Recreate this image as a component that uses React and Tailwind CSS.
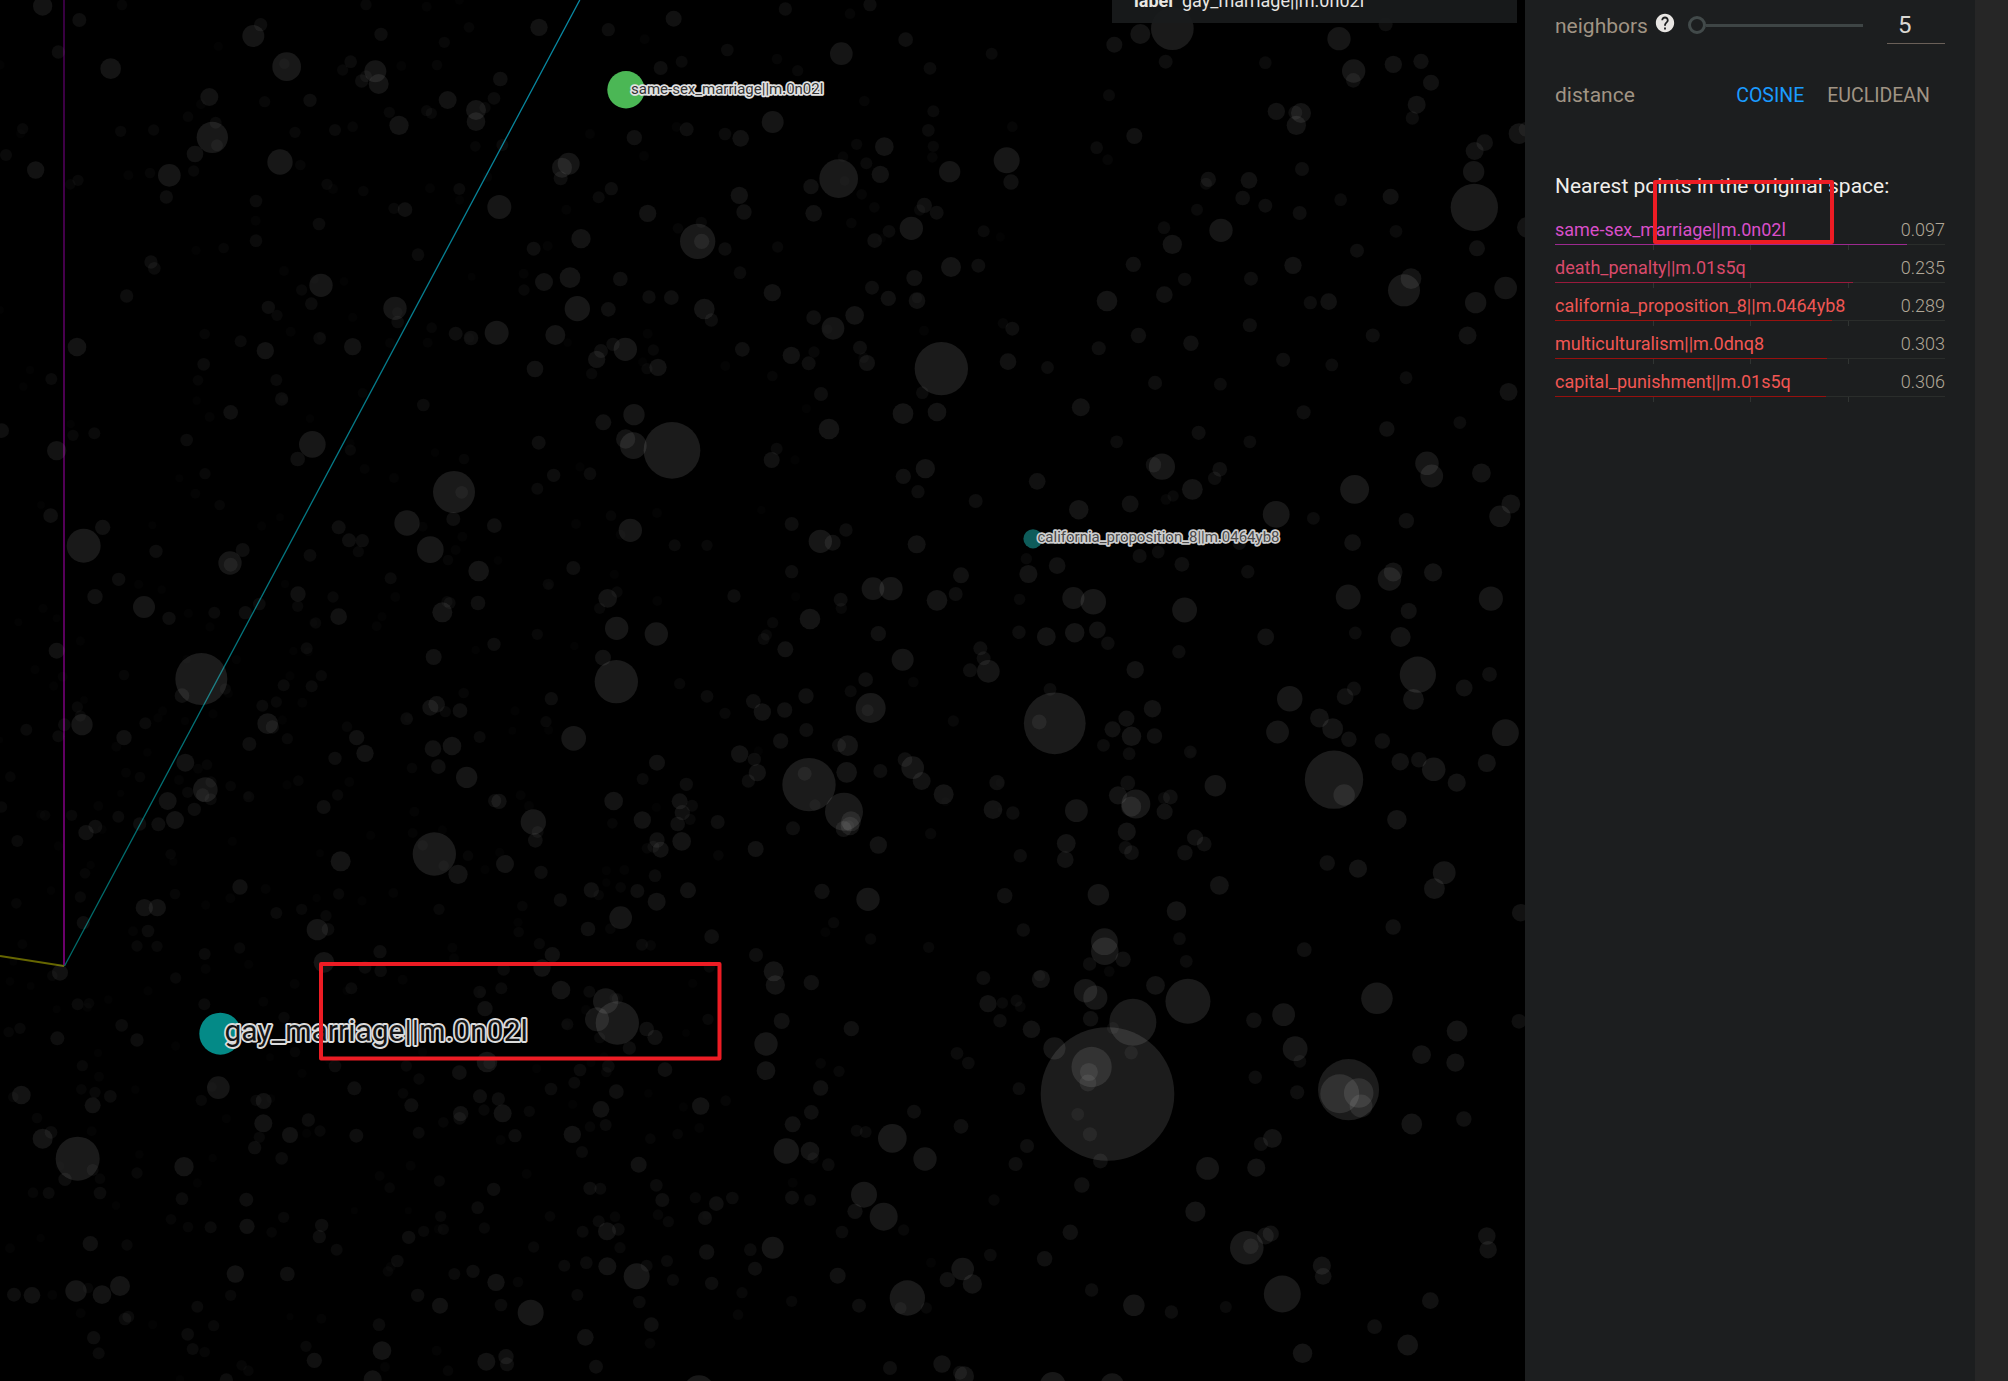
import React from 'react';

// Point cloud, grouped by sector. Each sector has an origin, a horizontal and
// vertical unit, and a flat list of "x,y,r" triples in those units.
const SECTORS = [
  {
    x: 0, y: 0, ux: 3, uy: 3,
    pts: `128,18,29 238,60,21 366,15,16 175,156,20 0,195,14 332,206,31 782,74,20 760,108,33 655,139,14 860,200,43 853,191,16 1098,14,17 1280,20,15 1378,0,14 1143,103,20 1407,82,16 1333,127,17 1052,185,19 1028,210,17 1085,243,20 1098,229,18 1126,214,33 1136,252,30 1204,198,15 1311,195,16 1501,237,22 1482,295,19 1343,300,27 1455,323,17 1428,330,30 1428,365,28 1168,337,17 1280,332,17 1294,340,17 1197,376,29 628,291,27 603,313,15 794,305,17 930,301,20 564,350,16 647,368,18 637,412,47 651,436,18 885,397,17 1005,390,18 1058,380,16 68,386,17 62,401,14 362,394,17 461,390,17 18,465,18 585,462,25 840,486,38 901,495,16 107,510,26 508,526,34 581,513,17 450,519,16 385,526,15 234,541,17 211,553,16 499,591,20 768,603,19 981,553,17 999,567,15 1090,573,16 1290,565,15 1378,567,18 1379,600,14 1426,439,16 1507,435,18 1462,531,15 1182,625,17 1215,629,22 1498,621,36 957,672,19 767,662,15 768,722,19 671,744,16 588,751,14 1254,764,19 453,786,20 463,805,19 852,813,15 963,856,35 943,838,14 905,870,17 934,911,19 1032,844,13 380,888,20 805,922,20 831,946,17 0,930,12 1185,925,35 1192,937,16 1193,966,19 1058,952,14 1295,983,16 1283,1028,15 1170,1029,15 1367,1001,21 1413,1014,22 1408,1014,15 1490,998,36 872,995,15 614,1002,16 722,1024,18 959,1015,19 964,1008,14 1058,1040,26 796,1052,26 231,1041,28 611,1093,19 594,1141,16 829,1140,18 845,1197,20 850,1197,14 90,1110,13 154,1137,18 70,1160,13 590,1202,13 1088,1179,15 692,1237,22 629,1251,15 930,1256,13 1270,1215,19 5,1292,22 212,1272,13 219,1306,17 283,1300,18 170,1352,29 560,1320,19 937,1333,40 893,1377,22 1051,1330,13 1051,1350,17 1305,1358,13 1392,1377,16 1415,830,12`,
  },
  {
    x: 500, y: 0, ux: 3, uy: 3,
    pts: `117,82,26 325,89,20 521,56,24 434,118,15 682,150,19 856,27,20 1050,41,16 1110,14,20 831,177,16 893,212,17 1024,161,34 1217,119,22 1475,161,18 1290,205,19 482,204,21 545,185,18 373,268,17 818,366,33 403,413,23 560,388,21 530,381,15 675,402,19 722,415,25 270,402,15 432,468,15 206,491,33 186,503,30 182,535,21 1093,303,16 1300,334,18 1285,391,19 1300,439,17 1297,472,16 1153,440,28 1070,433,17 1029,470,16 1016,536,58 1034,543,15 1099,490,18 1141,523,26 1349,515,32 1520,481,39 1533,546,23 1537,380,16 933,560,23 941,640,25 1085,583,16 1123,622,16 1054,669,16 1273,616,23 1259,630,17 1310,638,21 1234,685,35 1167,694,19 1124,722,22 1145,715,13 1451,694,18 1501,711,14 334,566,20 296,592,18 199,629,15 443,640,26 718,586,26 732,636,23 534,685,16 604,667,17 593,724,53 605,724,23 675,747,20 833,741,17 243,716,29 101,746,21 143,738,15 71,821,15 72,870,17 132,846,27 210,833,31 361,837,22 720,818,19 232,926,38 325,928,22 447,891,20 514,893,22 613,927,31 634,960,20 817,878,26 1116,863,21 1165,895,23 1243,834,24 1251,902,25 1251,894,16 1353,801,30 1435,797,21 166,1005,30 203,1028,13 339,1033,20 376,1048,35 303,1053,21 290,1078,26 275,1121,17 443,1001,15 460,1050,17 428,1086,14 441,1106,17 474,1102,26 105,1107,25 676,1098,15 727,1048,22 941,953,22 999,985,34 983,988,15 1064,946,28 1080,1043,21 1091,1073,16 1101,1089,24 874,1066,26 926,1090,21 942,1056,17 817,1128,16 1272,992,15 1509,970,16 1537,986,21 1524,1085,25 1324,1106,80 1267,1178,19 1209,1241,31 1311,1236,28 963,1182,21 919,1226,14 987,1287,31 402,1244,32 310,1267,24 377,1317,29 400,1337,40 516,1351,85 116,1328,21 830,1346,18 815,1380,24 885,1380,14`,
  },
  {
    x: 1090, y: 0, ux: 3, uy: 3,
    pts: `73,134,24 151,102,30 247,86,64 227,185,21 526,188,19 887,73,21 747,116,35 791,213,35 790,241,22 910,193,26 993,184,23 1023,248,24 980,314,27 967,354,20 57,286,18 133,408,24 20,443,19 53,479,16 559,334,26 616,338,21 633,339,30 619,376,29 636,507,21 355,538,23 348,551,18 477,541,25 458,594,22 321,629,18 526,617,21 629,639,21 752,599,19 902,590,24 918,694,19 393,691,35 222,683,19 247,733,29 130,793,23 284,838,20 223,884,25 483,836,21 609,796,26 801,752,21 1184,428,25 1154,453,27 1151,515,32 1153,622,71 1161,745,24 963,836,31 942,871,48 1247,864,34 1157,908,32 51,903,31 716,905,25 661,908,20 1287,401,31 1308,388,22 1312,682,31`,
  },
  {
    x: 0, y: 0, ux: 0.7809, uy: 0.7809,
    pts: `844,318,7 858,272,5.5 889,262,6 818,287,5 902,299,5.5 930,268,6 953,300,5 976,254,5.5 1002,281,5.5 1040,285,5 1072,262,5.5 1083,335,6 1146,262,7 1178,306,7 1140,330,5 1018,322,5.5 936,338,5.5 872,345,5 976,345,5 1098,295,5`,
  },
  {
    x: 1000, y: 460, ux: 2.958, uy: 3,
    pts: `110,64,25 233,149,29 385,132,25 454,14,23 479,20,39 650,28,22 635,55,20 569,88,31 512,108,17 491,118,16 817,163,40 927,175,19 1049,88,43 1263,10,35 1277,48,34 1424,39,28 1511,132,28 1479,169,32 1202,182,23 1043,248,25 708,250,20 78,296,17 169,317,25 84,342,27 58,418,17 413,288,21 468,276,19 538,313,22 733,335,20 217,414,33 276,425,38 546,450,37 56,517,20 137,530,28 221,518,29 288,510,25 319,550,20 400,629,26 529,575,20 786,531,25 1030,411,37 1163,336,28 1152,357,35 1281,337,27 1452,416,36 1209,453,24 1185,531,30 1051,519,19 1236,644,54 1223,718,31 1448,643,22 1373,684,25 1495,818,40 1440,909,27 148,688,19 162,790,92 116,786,22 451,746,26 374,776,24 333,808,24 389,829,29 457,828,23 306,856,19 382,881,19 563,876,19 566,878,14 857,716,38 821,816,34 1047,686,21 1021,710,25 945,774,28 984,806,31 1032,838,23 1131,843,23 988,959,87 1018,1005,32 1184,905,26 1239,899,23 1283,928,35 1351,968,27 1174,1079,29 0,968,14 0,1049,8 38,1059,20 378,969,22 349,1006,27 402,1032,43 388,1040,30 226,1052,34 637,977,32 504,1011,22 485,1014,18 487,1055,24 375,1115,27 371,1163,20 389,1178,22 196,1150,28 193,1199,25 577,1133,24 604,1152,22 547,1178,23 60,1187,20 14,1307,23 291,1304,32 649,1276,28 522,1353,29 968,1209,23 1059,1226,27 1314,1238,34 1285,1286,31 1540,1358,26`,
  },
  {
    x: 0, y: 460, ux: 3, uy: 3,
    pts: `615,41,17 586,101,15 659,135,16 538,55,12 123,135,12 152,167,22 308,202,23 251,257,51 468,274,20 457,196,12 785,198,14 840,172,12 728,270,21 690,309,35 692,314,21 356,358,20 285,410,23 432,441,33 507,475,20 416,373,14 485,389,13 565,460,14 643,458,18 630,501,14 736,458,20 778,432,19 930,286,19 894,402,23 893,439,17 855,372,13 999,411,17 1016,202,21 1047,241,21 1087,242,20 1075,275,17 1016,470,25 947,489,17 940,488,13 1094,27,15 1182,54,15 1362,96,63 1385,97,19 1360,177,21 1221,189,38 1268,200,15 1483,197,22 1387,230,15 1291,269,40 1367,270,15 1344,300,16 1436,333,31 1494,301,13 1172,355,18 1186,411,15 1434,429,22 1327,457,30 1341,425,17 1349,429,18 1146,470,14 1130,499,15 1482,553,20 1427,570,13 1301,591,24 129,445,14 55,487,12 170,475,12 241,543,14 170,572,24 105,629,14 188,650,15 161,678,14 372,645,16 709,599,14 604,657,78 546,707,22 676,687,17 685,700,14 560,598,13 920,565,18 925,575,14 880,573,13 851,676,18 870,648,14 964,647,17 935,679,18 907,728,15 829,726,17 787,737,18 232,741,17 252,720,12 241,768,17 246,794,32 193,794,19 175,829,18 79,809,18 0,840,10 372,833,23 349,860,15 436,790,18 474,774,14 488,753,14 555,783,13 639,762,14 803,791,31 817,801,20 847,780,14 862,836,17 748,852,21 442,877,13 1041,800,16 1070,833,23 1095,880,26 1005,895,20 1220,776,19 1226,775,14 1310,733,25 1291,743,24 1336,755,17 1380,752,22 1391,699,16 1299,866,25 1356,858,28 1439,831,18 1315,920,22 1236,924,16 1400,952,32 1537,812,12 1545,753,14 556,908,27 621,914,16 594,926,15 31,950,16 378,938,15 420,951,16 537,960,15 563,997,17 616,989,37 608,1005,20 633,966,17 632,1018,18 692,978,16 746,1010,17 743,1007,13 895,962,16 861,975,14 1048,966,15 1013,1005,17 971,1041,21 503,1023,27 583,1048,20 525,1080,27 475,1093,21 419,1092,20 355,1070,18 295,1038,15 215,1066,17 135,1066,16 122,1063,14 5,1041,17 362,1000,11 286,1100,21 258,1118,23 306,1108,14 52,1143,18 175,1158,14 697,1144,14 512,1183,16 520,1205,13 255,1240,16 272,1215,13 1484,1022,20 1497,1024,23 1243,1055,15 1112,1126,14 1238,1119,15 1327,1110,14 1303,1182,65 1268,1156,16 1331,1217,16 1374,1243,29 1404,1187,16 1455,1229,14 1499,1177,14 1515,1212,27 1022,1204,30 960,1180,12 720,1281,23 797,1287,15 691,1315,15 525,1302,16 241,1311,17 153,1292,13 49,1330,16 617,1335,14 829,1359,18 905,1348,17 1016,1302,17 950,1314,13 978,1367,17 1180,1299,15 1086,1323,14 1317,1348,17 433,1343,26 472,1343,26 250,1388,20`,
  },
  {
    x: 500, y: 460, ux: 3, uy: 3,
    pts: `161,46,20 112,86,18 270,41,19 240,21,14 333,167,16 471,159,15 228,192,15 391,211,35 362,224,15 784,150,13 1210,49,23 1276,26,29 1254,95,20 1427,123,21 524,256,18 621,256,17 220,324,21 145,373,17 147,377,12 343,343,14 323,415,28 351,396,17 299,445,17 472,423,15 350,505,35 469,522,35 112,523,17 223,558,13 309,593,24 349,665,65 875,192,21 1038,210,20 961,244,35 998,248,24 1250,253,27 875,335,20 702,408,20 887,410,14 1022,419,21 1024,445,17 1119,386,34 1173,386,35 1383,346,24 1367,402,21 1311,421,31 930,477,31 818,488,17 799,525,17 791,537,18 856,568,24 1135,521,23 1208,599,33 1097,659,22 1240,666,16 1441,565,21 1451,595,21 1410,631,21 1465,634,34 1052,694,18 1112,744,45 1103,751,18 1360,783,17 539,671,17 621,709,19 675,760,17 760,724,22 787,756,26 854,750,23 918,708,23 154,716,20 138,785,17 146,810,14 221,835,37 471,908,24 428,957,18 919,810,21 842,843,23 719,882,26 763,898,20 775,873,14 772,938,26 745,963,20 1017,856,21 1043,857,31 1040,937,31 1141,933,21 1215,899,22 1238,923,34 1265,963,27 1331,1003,30 1337,1025,14 1491,968,23 1479,1049,28 927,974,80 914,941,21 945,1035,17 1032,1055,57 1053,1084,30 1031,1107,24 1050,1098,28 1046,1098,17 879,1105,21 559,973,20 539,1024,24 576,1037,18 547,1058,23 570,1078,17 533,1092,22 545,1144,28 341,1023,28 427,1080,26 469,1042,14 337,1090,16 653,1086,21 471,1140,23 482,1169,24 441,1165,16 460,1160,18 62,1006,15 87,1038,15 100,1086,38 113,1116,18 106,1141,22 767,1167,24 655,1186,16 1135,1155,26 1292,1121,17 123,1237,20 319,1232,14 373,1230,15 465,1247,19 319,1268,13 362,1282,16 274,1290,23 296,1305,16 412,1293,21 564,1291,24 181,1320,20 470,1325,27 67,1338,16 54,1387,14 56,1416,16 362,1373,34 331,1406,16 966,1294,23 1104,1318,35 1001,1388,17 976,1417,15`,
  },
  {
    x: 1000, y: 920, ux: 2.958, uy: 3,
    pts: `69,30,20 309,65,40 310,94,41 364,118,23 265,132,20 323,154,16 121,177,27 117,167,17 49,242,18 60,260,16 7,249,17 0,302,20 253,212,35 282,233,36 460,196,28 268,296,23 93,328,26 161,385,33 393,307,70 318,522,199 334,324,18 271,441,60 263,456,27 260,489,25 388,398,20 230,583,19 266,643,21 297,723,22 556,244,67 531,56,19 551,124,19 900,89,22 1163,21,23 1115,235,47 1352,333,31 1347,428,27 1535,304,22 1247,404,28 1372,597,23 1218,612,31 751,301,23 839,284,34 873,386,37 887,424,19 755,472,20 879,517,21 1031,509,91 1005,521,58 1061,519,44 1068,558,34 806,655,28 772,672,21 758,743,27 614,745,34 56,506,19 80,678,21 46,732,21 242,795,23 578,875,30 208,937,23 132,1016,23 730,983,50 742,979,23 785,948,25 801,941,24 952,1037,27 956,1069,25 1440,948,26 1444,989,26 835,1122,55 271,1110,20 396,1156,32 507,1176,20 668,1161,18 1273,1142,25 1108,1220,22 1206,1275,31 895,1300,29 156,1394,38 332,1394,34`,
  },
  {
    x: 0, y: 920, ux: 3, uy: 3,
    pts: `399,34,15 444,33,19 411,78,17 471,79,17 719,84,17 614,102,18 617,147,15 67,73,15 40,125,12 952,29,32 984,28,19 1140,95,20 1357,83,15 1362,115,15 972,127,31 1095,142,19 1142,152,19 1511,148,19 1054,205,18 1040,212,13 1208,179,15 180,158,24 157,167,16 30,184,13 92,198,12 527,174,17 444,213,14 746,133,14 884,192,15 233,253,18 267,250,16 262,262,14 325,239,13 170,268,12 613,253,18 790,245,15 852,292,17 365,316,19 411,360,20 172,355,21 60,325,17 26,336,16 527,378,14 294,399,13 247,437,17 297,470,15 885,396,16 906,460,14 810,412,12 244,508,16 285,517,17 331,529,19 278,556,24 406,509,13 64,525,28 40,531,16 111,594,16 275,634,15 153,637,19 128,656,30 233,716,66 195,778,20 180,738,14 278,750,18 300,776,16 300,819,19 99,818,16 146,819,18 655,503,34 636,501,15 604,541,17 791,543,24 768,541,17 812,536,14 679,596,14 790,610,27 778,652,17 764,683,20 870,645,24 925,600,20 960,633,17 920,640,14 845,715,19 638,714,13 418,703,13 411,759,17 552,740,29 592,789,14 546,836,19 739,839,21 851,892,17 513,898,16 564,921,16 632,922,18 741,919,23 815,937,16 348,857,13 122,954,13 30,985,15 271,971,23 381,975,17 1005,438,19 988,420,14 1063,505,21 1069,647,21 1219,438,17 1257,477,17 1209,520,16 1234,556,21 1268,396,14 1461,426,31 1468,430,18 1378,458,22 1440,529,21 1495,537,20 1382,581,23 1379,595,19 1452,570,17 1508,580,27 1330,607,16 1256,638,18 1502,660,15 1545,647,20 1232,737,15 1139,768,15 1169,803,16 1318,783,17 1481,808,20 1433,863,19 1322,889,17 1330,928,17 1315,927,14 1453,924,17 965,916,20 958,950,20 1010,989,18 1063,872,11 1225,872,11 1271,934,17 1226,952,20 1192,1023,19 1172,1041,15 1164,1054,16 1363,1062,18 1419,1054,20 1488,1087,26 706,1062,26 862,1062,22 692,1126,17 592,1160,18 641,1217,17 563,1243,19 578,1287,18 614,1296,16 42,1124,21 96,1126,25 157,1125,15 228,1113,32 264,1104,16 306,1124,28 360,1098,30 375,1197,19 385,1190,18 242,1180,15 458,1214,14 281,1253,20 296,1300,18 870,1190,11 964,1196,15 1253,1126,20 1320,1157,24 1503,1155,19 1137,1214,19 1146,1292,28 1155,1341,15 1118,1378,27 918,1279,17 943,1321,23 725,1336,16 745,1352,16 679,1380,20 540,1378,13 1310,1292,15 1344,1352,16 1459,1325,27 1518,1310,23 1521,1333,21 1439,216,19 1445,218,14 1504,205,18 1455,266,23`,
  },
  {
    x: 500, y: 920, ux: 3, uy: 3,
    pts: `264,27,22 118,71,17 157,104,23 126,144,26 426,74,18 452,76,16 635,50,22 628,141,17 578,190,14 1112,57,17 1286,82,17 768,105,21 821,154,30 826,195,29 934,188,23 183,210,28 268,215,18 317,243,38 352,236,17 344,234,16 258,270,15 291,298,36 352,309,65 202,313,18 197,314,14 299,353,17 440,327,22 465,352,23 388,384,20 624,298,17 558,339,12 845,303,24 798,372,35 798,452,28 1054,326,23 1450,174,21 1464,251,26 1371,400,19 1405,429,19 962,430,16 1017,454,17 240,450,19 273,428,14 312,410,13 325,439,19 319,456,16 495,449,22 223,488,18 153,507,19 349,515,22 303,568,25 110,446,14 218,553,14 445,520,13 88,574,17 317,615,18 270,620,16 217,643,26 246,696,18 602,558,26 550,561,14 677,542,16 598,624,15 533,642,16 451,656,16 416,734,24 962,504,23 934,577,22 878,613,24 859,693,38 930,693,28 939,714,17 985,734,19 1070,632,18 1097,636,18 1177,655,43 1275,717,35 1242,575,21 1383,619,22 878,788,15 876,833,21 930,840,18 1092,824,39 1065,874,23 1151,890,42 1026,936,19 1211,930,17 1482,840,17 469,796,19 487,840,21 270,805,20 301,806,18 586,833,17 697,834,19 649,851,22 615,894,21 620,886,14 474,884,16 505,905,17 80,762,15 150,889,16 248,935,18 296,904,18 345,890,16 321,934,27 355,928,19 360,983,17 101,981,17 620,996,23 751,989,19 765,1046,21 818,983,33 193,1037,18 259,1028,19 322,1039,27 410,1069,39 440,1037,18 501,1023,18 519,1080,18 635,1090,20 726,1118,17 54,1086,16 232,1125,18 92,1178,39 418,1146,19 454,1214,22 256,1252,25 450,1270,16 714,1184,16 875,1144,17 1013,1067,24 1077,1157,21 1222,1134,53 1202,1164,18 1279,1164,17 1293,1028,15 1388,1047,34 1342,1079,23 1417,1092,29 1471,1005,19 288,1340,21 597,1412,46 1170,1344,21 1326,1332,26 1380,1358,21 1393,1368,29`,
  },
];

// Sectors overlap slightly, so a point listed by two of them is kept once.
const POINTS = SECTORS.reduce((all, { x, y, ux, uy, pts }) => {
  const own = pts.trim().split(/\s+/).map((p) => {
    const [px, py, pr] = p.split(',').map(Number);
    return { x: x + px / ux, y: y + py / uy, r: pr / ((ux + uy) / 2) };
  });
  const fresh = own.filter(
    (p) => !all.some((q) => Math.hypot(p.x - q.x, p.y - q.y) < 3 && Math.abs(p.r - q.r) < 1.6),
  );
  return all.concat(fresh);
}, []);

// Distant points are smaller and fade into the background.
const fade = (r) => Math.max(0.01, 0.112 * (1 - Math.pow(4.5 / Math.max(r, 4.6), 1.5)));

const NEIGHBORS = [
  { name: 'same-sex_marriage||m.0n02l', dist: 0.097, text: 'text-[#d94fc9]', bar: 'bg-[#9c2a90]' },
  { name: 'death_penalty||m.01s5q', dist: 0.235, text: 'text-[#da4a6b]', bar: 'bg-[#981a3c]' },
  { name: 'california_proposition_8||m.0464yb8', dist: 0.289, text: 'text-[#ee5653]', bar: 'bg-[#97120f]' },
  { name: 'multiculturalism||m.0dnq8', dist: 0.303, text: 'text-[#f25653]', bar: 'bg-[#97100e]' },
  { name: 'capital_punishment||m.01s5q', dist: 0.306, text: 'text-[#f25653]', bar: 'bg-[#97100e]' },
];

function Scatter() {
  return (
    <svg className="block h-[1381px] w-[1525px]" viewBox="0 0 1525 1381" fontFamily="Roboto, sans-serif">
      <defs>
        <linearGradient id="axisV" x1="0" y1="0" x2="0" y2="966" gradientUnits="userSpaceOnUse">
          <stop offset="0" stopColor="#36003f" />
          <stop offset="1" stopColor="#6c006c" />
        </linearGradient>
        <linearGradient id="axisD" x1="0" y1="0" x2="0" y2="966" gradientUnits="userSpaceOnUse">
          <stop offset="0" stopColor="#0889a4" />
          <stop offset="1" stopColor="#006a68" />
        </linearGradient>
      </defs>
      <rect x="63" y="0" width="2" height="966" fill="url(#axisV)" />
      <line x1="64.5" y1="966" x2="579.8" y2="0" stroke="url(#axisD)" strokeWidth="1.3" />
      <line x1="0" y1="956" x2="64" y2="966" stroke="#666600" strokeWidth="1.8" />
      <g fill="#fff">
        {POINTS.map((p, i) => (
          <circle key={i} cx={p.x} cy={p.y} r={p.r} fillOpacity={fade(p.r)} />
        ))}
      </g>
      <circle cx="626" cy="89.8" r="18.7" fill="#4bb755" />
      <circle cx="220.3" cy="1033.7" r="21" fill="#048a87" />
      <circle cx="1033" cy="538.8" r="9.6" fill="#0e5c5a" />
      <g paintOrder="stroke" strokeLinejoin="round">
        <text x="631" y="93.7" fontSize="15" fill="#333" stroke="#e2e2e2" strokeWidth="3.4">same-sex_marriage||m.0n02l</text>
        <text x="1037.5" y="542" fontSize="15" fill="#4a4a4a" stroke="#cfcfcf" strokeWidth="3.4">california_proposition_8||m.0464yb8</text>
        <text x="224.5" y="1041" fontSize="30" fill="#161616" stroke="#dcdcdc" strokeWidth="3.8">gay_marriage||m.0n02l</text>
      </g>
      <rect x="321" y="964" width="398.5" height="94.5" fill="none" stroke="#ed1c24" strokeWidth="4" strokeLinejoin="round" />
    </svg>
  );
}

function HelpIcon() {
  return (
    <svg className="h-[22px] w-[22px]" viewBox="0 0 24 24" fill="#e8e6e3">
      <path d="M12 2C6.48 2 2 6.48 2 12s4.48 10 10 10 10-4.48 10-10S17.52 2 12 2zm1 17h-2v-2h2v2zm2.07-7.75l-.9.92C13.45 12.9 13 13.5 13 15h-2v-.5c0-1.1.45-2.1 1.17-2.83l1.24-1.26c.37-.36.59-.86.59-1.41 0-1.1-.9-2-2-2s-2 .9-2 2H8c0-2.21 1.79-4 4-4s4 1.79 4 4c0 .88-.36 1.68-.93 2.25z" />
    </svg>
  );
}

function Slider() {
  return (
    <div className="ml-[12px] flex h-[18px] w-[175px] items-center">
      <div className="h-[18px] w-[18px] rounded-full border-[3px] border-[#424a4a]" />
      <div className="h-[3px] flex-1 bg-[#3e4545]" />
    </div>
  );
}

function Neighbor({ item }) {
  return (
    <li className="h-[38px]">
      <div className="flex h-[31px] items-center justify-between text-[18px] leading-[31px]">
        <span className={'relative top-px ' + item.text}>{item.name}</span>
        <span className="relative top-px font-light text-[#b0a797]">{item.dist.toFixed(3)}</span>
      </div>
      <div className="h-px bg-[#2a2d2b]">
        <div className={'h-px ' + item.bar} style={{ width: (1 - item.dist) * 100 + '%' }} />
      </div>
      <div className="flex h-[5px]">
        <i className="w-[99px] border-r border-[#303432]" />
        <i className="w-[97px] border-r border-[#303432]" />
        <i className="w-[98px] border-r border-[#303432]" />
      </div>
    </li>
  );
}

export default function App() {
  return (
    <div className="relative flex h-[1381px] w-[2008px] overflow-hidden bg-black font-['Roboto',sans-serif]">
      <main className="relative w-[1525px] shrink-0 overflow-hidden">
        <Scatter />
        <div className="absolute top-0 left-[1112px] h-[23px] w-[405px] bg-[#1a1c1d]/90">
          <div className="-mt-[14px] flex gap-[9px] pl-[22px] text-[18px] leading-[30px] text-[#e8e6e3]">
            <b className="font-bold">label</b>
            <span>gay_marriage||m.0n02l</span>
          </div>
        </div>
      </main>
      <aside className="w-[450px] shrink-0 bg-[#1c1e1f] pr-[30px] pl-[30px] text-[21px] text-[#a09484]">
        <div className="flex h-[44px] items-start">
          <span className="mt-[11px] leading-[31px]">neighbors</span>
          <span className="mt-[12px] ml-[6px]"><HelpIcon /></span>
          <div className="mt-[16px]"><Slider /></div>
          <div className="ml-auto h-[44px] w-[58px] border-b border-[#6a6058] pl-[11px] text-[24px] leading-[51px] text-[#dad7d2]">5</div>
        </div>
        <div className="mt-[36px] flex h-[31px] items-center leading-[31px]">
          <span>distance</span>
          <span className="ml-auto text-[19.5px] text-[#1a9bff]">COSINE</span>
          <span className="mr-[15px] ml-[23px] text-[19.5px]">EUCLIDEAN</span>
        </div>
        <h2 className="mt-[60px] h-[31px] leading-[31px] text-[#f0eeeb]">Nearest points in the original space:</h2>
        <ul className="mt-[11px]">
          {NEIGHBORS.map((n) => (
            <Neighbor key={n.name} item={n} />
          ))}
        </ul>
      </aside>
      <div className="flex-1 bg-[#262626]" />
      <div className="absolute top-[180px] left-[1653px] h-[64px] w-[181px] rounded-[2px] border-4 border-[#ed1c24]" />
    </div>
  );
}
